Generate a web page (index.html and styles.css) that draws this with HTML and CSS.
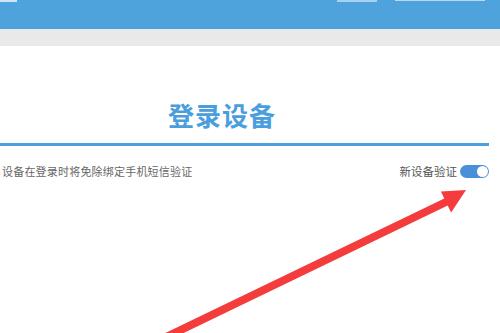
FILE: index.html
```html
<!DOCTYPE html>
<html lang="zh-CN">
<head>
<meta charset="utf-8">
<title>登录设备</title>
<link rel="stylesheet" href="styles.css">
</head>
<body>
<div class="page">
  <header class="header">
    <span class="frag frag-a"></span>
    <span class="spacer"></span>
    <span class="frag frag-b"></span>
    <span class="frag frag-c"></span>
  </header>
  <div class="band"></div>
  <main class="main">
    <h1 class="title">登录设备</h1>
    <div class="rule"></div>
    <div class="row">
      <span class="desc">设备在登录时将免除绑定手机短信验证</span>
      <span class="opt">
        <span class="opt-label">新设备验证</span>
        <span class="toggle"><span class="knob"></span></span>
      </span>
    </div>
  </main>
  <svg class="arrow" width="500" height="333" viewBox="0 0 500 333">
    <polygon fill="#f43c3c" points="158.3,336.4 444.3,198.4 440.9,191.5 466,190 451.1,212.5 447.7,205.6 161.7,343.6"/>
  </svg>
</div>
</body>
</html>
```
FILE: styles.css
```css
html, body {
  margin: 0;
  padding: 0;
  background: #ffffff;
}
body {
  font-family: "Noto Sans CJK SC", "Noto Sans", sans-serif;
}
.page {
  position: relative;
  width: 500px;
  height: 333px;
  overflow: hidden;
}
.header {
  height: 29px;
  background: #4ea3dc;
  display: flex;
  align-items: flex-start;
}
.frag {
  display: block;
  height: 2px;
}
.frag-a {
  width: 17px;
  background: #cfe6f6;
}
.spacer {
  flex: 1;
}
.frag-b {
  width: 40px;
  margin-right: 18px;
  background: #a9d2ef;
}
.frag-c {
  width: 90px;
  height: 1px;
  margin-right: 15px;
  background: #b8daf2;
}
.band {
  height: 17px;
  background: #e9e9e9;
}
.main {
  display: flex;
  flex-direction: column;
}
.title {
  margin: 54px 0 0 168px;
  font-size: 26px;
  line-height: 30px;
  font-weight: bold;
  color: #4a9ede;
  letter-spacing: 1px;
}
.rule {
  margin-top: 13px;
  width: 489px;
  height: 3px;
  background: #4aa0df;
}
.row {
  margin-top: 18px;
  width: 489px;
  display: flex;
  align-items: center;
  justify-content: space-between;
}
.desc {
  margin-left: 2px;
  font-size: 11px;
  line-height: 14px;
  color: #666666;
  letter-spacing: 0.2px;
}
.opt {
  display: flex;
  align-items: center;
  gap: 3px;
}
.opt-label {
  font-size: 11.5px;
  line-height: 14px;
  color: #555555;
}
.toggle {
  width: 29px;
  height: 13px;
  border-radius: 7px;
  background: #4a90d9;
  display: flex;
  align-items: center;
  justify-content: flex-end;
  padding-right: 1px;
  box-sizing: border-box;
}
.knob {
  width: 11px;
  height: 11px;
  border-radius: 50%;
  background: #ffffff;
}
.arrow {
  position: absolute;
  left: 0;
  top: 0;
  pointer-events: none;
}
```
